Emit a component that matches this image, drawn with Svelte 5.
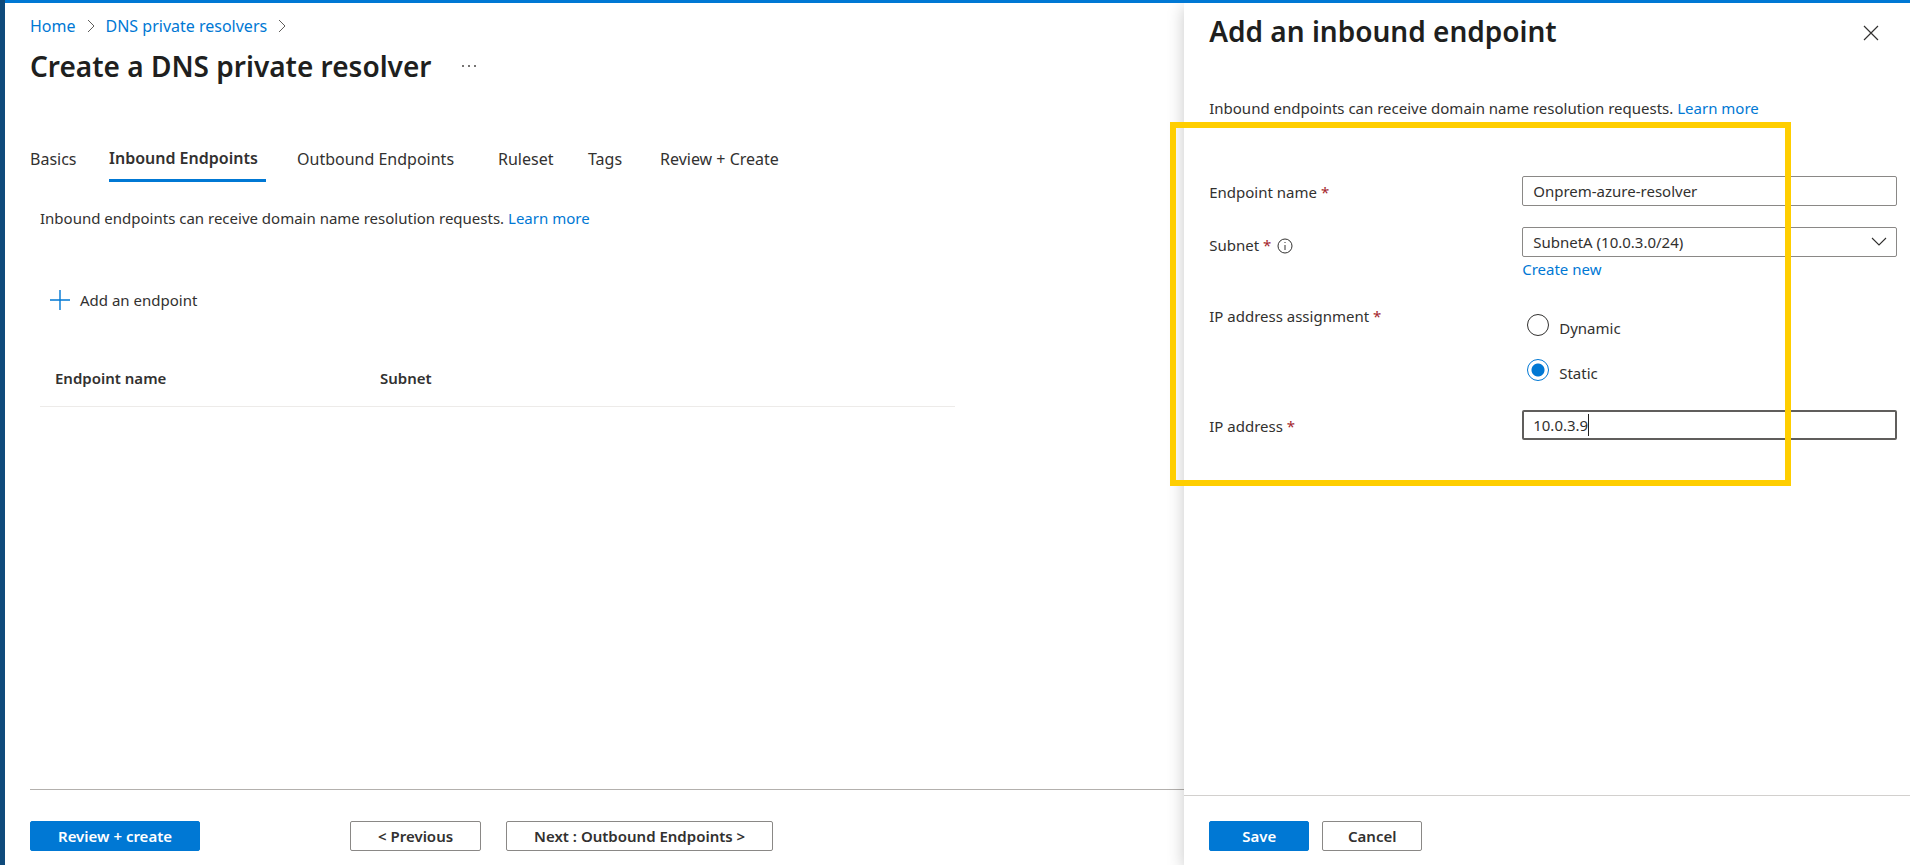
<script>
  const tabs = ['Basics', 'Inbound Endpoints', 'Outbound Endpoints', 'Ruleset', 'Tags', 'Review + Create'];
  let active = $state('Inbound Endpoints');
  let endpointName = $state('Onprem-azure-resolver');
  let subnet = $state('SubnetA (10.0.3.0/24)');
  let assignment = $state('static');
  let ipAddress = $state('10.0.3.9');
</script>

{#snippet chevron()}
  <svg class="chevron" width="8" height="14" viewBox="0 0 8 14" aria-hidden="true">
    <path d="M1 1l6 6-6 6" fill="none" stroke="#605e5c" />
  </svg>
{/snippet}

<div class="shell">
  <main class="page">
    <nav class="crumbs" aria-label="Breadcrumb">
      <a href="#home">Home</a>
      {@render chevron()}
      <a href="#resolvers">DNS private resolvers</a>
      {@render chevron()}
    </nav>

    <header class="title">
      <h1>Create a DNS private resolver</h1>
      <button class="more" aria-label="More actions">
        <svg width="16" height="4" viewBox="0 0 16 4" fill="#484644">
          <circle cx="2" cy="2" r="1" /><circle cx="8" cy="2" r="1" /><circle cx="14" cy="2" r="1" />
        </svg>
      </button>
    </header>

    <div class="tabs" role="tablist">
      {#each tabs as tab}
        <button role="tab" class="tab" class:active={tab === active} aria-selected={tab === active} onclick={() => (active = tab)}>{tab}</button>
      {/each}
    </div>

    <section class="content">
      <p>Inbound endpoints can receive domain name resolution requests. <a href="#learn">Learn more</a></p>
      <button class="add">
        <svg width="20" height="20" viewBox="0 0 20 20" aria-hidden="true">
          <path d="M10 0v20M0 10h20" stroke="#0078d4" stroke-width="1.4" />
        </svg>
        Add an endpoint
      </button>
      <table>
        <thead>
          <tr><th class="name">Endpoint name</th><th>Subnet</th></tr>
        </thead>
      </table>
    </section>

    <footer class="actions">
      <button class="btn primary review">Review + create</button>
      <button class="btn">&lt; Previous</button>
      <button class="btn next">Next : Outbound Endpoints &gt;</button>
    </footer>
  </main>

  <aside class="panel">
    <header class="panel-head">
      <h2>Add an inbound endpoint</h2>
      <button class="close" aria-label="Close">
        <svg width="16" height="16" viewBox="0 0 16 16"><path d="M1 1l14 14M15 1L1 15" stroke="#323130" stroke-width="1.2" /></svg>
      </button>
    </header>
    <p class="intro">Inbound endpoints can receive domain name resolution requests. <a href="#learn-more">Learn more</a></p>

    <form>
      <label class="label" for="name">Endpoint name <b>*</b></label>
      <div class="cell"><input id="name" class="box" type="text" bind:value={endpointName} /></div>

      <div class="label with-info">
        <label for="subnet">Subnet <b>*</b></label>
        <svg class="info" width="16" height="16" viewBox="0 0 16 16" aria-hidden="true">
          <circle cx="8" cy="8" r="7" fill="none" stroke="#323130" />
          <path d="M8 7v5M8 4v1" stroke="#323130" />
        </svg>
      </div>
      <div class="cell subnet">
        <div class="select">
          <select id="subnet" class="box" bind:value={subnet}>
            <option>SubnetA (10.0.3.0/24)</option>
          </select>
          <svg width="16" height="10" viewBox="0 0 16 10" aria-hidden="true">
            <path d="M1 1l7 7 7-7" fill="none" stroke="#323130" stroke-width="1.1" />
          </svg>
        </div>
        <a href="#create">Create new</a>
      </div>

      <span class="label" id="assignment">IP address assignment <b>*</b></span>
      <div class="radios" role="radiogroup" aria-labelledby="assignment">
        <label><input type="radio" name="mode" value="dynamic" bind:group={assignment} /><span>Dynamic</span></label>
        <label><input type="radio" name="mode" value="static" bind:group={assignment} /><span>Static</span></label>
      </div>

      <label class="label" for="ip">IP address <b>*</b></label>
      <div class="cell ip">
        <input id="ip" class="box focused" type="text" bind:value={ipAddress} />
        <i class="caret"></i>
      </div>
      <div class="highlight"></div>
    </form>

    <footer class="panel-foot">
      <button class="btn primary">Save</button>
      <button class="btn">Cancel</button>
    </footer>
  </aside>
</div>

<style>
  :global(body) {
    margin: 0;
    background: #fff;
    overflow: hidden;
  }
  * {
    box-sizing: border-box;
  }
  .shell {
    display: flex;
    min-height: 100vh;
    border-top: 3px solid #0078d4;
    color: #323130;
    font: 15px/20px 'Noto Sans', 'Open Sans', sans-serif;
    position: relative;
  }
  .shell::before {
    content: '';
    position: absolute;
    inset: -3px auto 0 0;
    width: 5px;
    background: #0f4a7b;
  }
  a {
    color: #0078d4;
    text-decoration: none;
  }
  p, h1, h2 {
    margin: 0;
  }
  h1, h2 {
    color: #201f1e;
    font-size: 28px;
    line-height: 36px;
    font-weight: 600;
  }
  button {
    font: inherit;
    color: inherit;
    background: none;
    border: 0;
    padding: 0;
    cursor: pointer;
  }
  svg {
    display: block;
    flex: none;
  }
  .page {
    flex: 1;
    min-width: 0;
    display: flex;
    flex-direction: column;
    padding: 12px 0 0 30px;
  }
  .crumbs {
    display: flex;
    align-items: center;
    gap: 11px;
    font-size: 16px;
    line-height: 22px;
  }
  .title {
    display: flex;
    align-items: center;
    gap: 30px;
    margin-top: 11px;
  }
  .tabs {
    display: grid;
    grid-template-columns: 48px 157px 170px 59px 41px auto;
    justify-content: start;
    gap: 31px;
    margin-top: 58px;
    font-size: 16px;
    line-height: 30px;
  }
  .tab {
    height: 40px;
    padding-bottom: 7px;
    text-align: left;
    white-space: nowrap;
  }
  .tab.active {
    padding-bottom: 5px;
    font-weight: 600;
    border-bottom: 3px solid #0078d4;
  }
  .content {
    flex: 1;
    padding: 26px 0 0 10px;
  }
  .add {
    display: flex;
    align-items: center;
    gap: 10px;
    margin: 62px 0 0 10px;
  }
  table {
    width: 80%;
    margin-top: 58px;
    border-collapse: collapse;
  }
  th {
    height: 38px;
    padding: 0 0 0 15px;
    text-align: left;
    vertical-align: top;
    font-weight: 600;
    border-bottom: 1px solid #edebe9;
  }
  .name {
    width: 325px;
  }
  .actions, .panel-foot {
    display: flex;
    padding-bottom: 14px;
  }
  .actions {
    gap: 25px;
    padding-top: 31px;
    border-top: 1px solid #b3b0ad;
  }
  .btn {
    height: 30px;
    padding: 0 27px;
    border: 1px solid #8a8886;
    border-radius: 2px;
    font-weight: 600;
    line-height: 26px;
    white-space: nowrap;
  }
  .btn.primary {
    background: #0078d4;
    border-color: #0078d4;
    color: #fff;
  }
  .review {
    margin-right: 125px;
  }
  .panel {
    width: 38%;
    display: flex;
    flex-direction: column;
    background: #fff;
    box-shadow: 0 4px 16px rgba(0, 0, 0, 0.22);
    clip-path: inset(0 0 0 -30px);
  }
  .panel-head {
    display: flex;
    justify-content: space-between;
    padding: 10px 31px 0 25px;
  }
  .close {
    height: 40px;
  }
  .intro {
    padding: 45px 25px 0;
  }
  form {
    flex: 1;
    position: relative;
    display: grid;
    grid-template-columns: 313px 1fr;
    grid-template-rows: 51px 73px 110px 30px;
    padding: 58px 13px 0 25px;
  }
  .label {
    padding-top: 6px;
  }
  .with-info {
    display: flex;
    gap: 6px;
    padding-top: 8px;
  }
  b {
    color: #a4262c;
    font-weight: 400;
  }
  .info {
    margin-top: 3px;
  }
  .box {
    display: block;
    width: 100%;
    height: 30px;
    padding: 0 10px;
    border: 1px solid #8a8886;
    border-radius: 2px;
    background: #fff;
    color: inherit;
    font: inherit;
    outline: 0;
    appearance: none;
  }
  .box.focused {
    border: 2px solid #605e5c;
    padding: 0 9px;
    caret-color: transparent;
  }
  .select, .ip {
    position: relative;
  }
  .select svg {
    position: absolute;
    right: 10px;
    top: 10px;
    pointer-events: none;
  }
  .subnet a {
    display: inline-block;
    margin-top: 2px;
  }
  .caret {
    position: absolute;
    left: 66px;
    top: 4px;
    width: 1px;
    height: 22px;
    background: #201f1e;
  }
  .radios {
    padding: 14px 0 0 5px;
  }
  .radios label {
    display: flex;
    gap: 10px;
    height: 45px;
  }
  .radios span {
    padding-top: 4px;
  }
  .radios input {
    appearance: none;
    width: 22px;
    height: 22px;
    margin: 0;
    border: 1px solid #323130;
    border-radius: 50%;
  }
  .radios input:checked {
    border-color: #0078d4;
    background: radial-gradient(circle, #0078d4 6px, transparent 7px);
  }
  .highlight {
    position: absolute;
    left: -14px;
    right: 119px;
    top: 4px;
    height: 364px;
    border: 6px solid #ffce00;
    pointer-events: none;
  }
  .panel-foot {
    gap: 13px;
    padding-top: 25px;
    padding-left: 25px;
    border-top: 1px solid #d2d0ce;
  }
  .panel-foot .btn {
    width: 100px;
    padding: 0;
  }
</style>
